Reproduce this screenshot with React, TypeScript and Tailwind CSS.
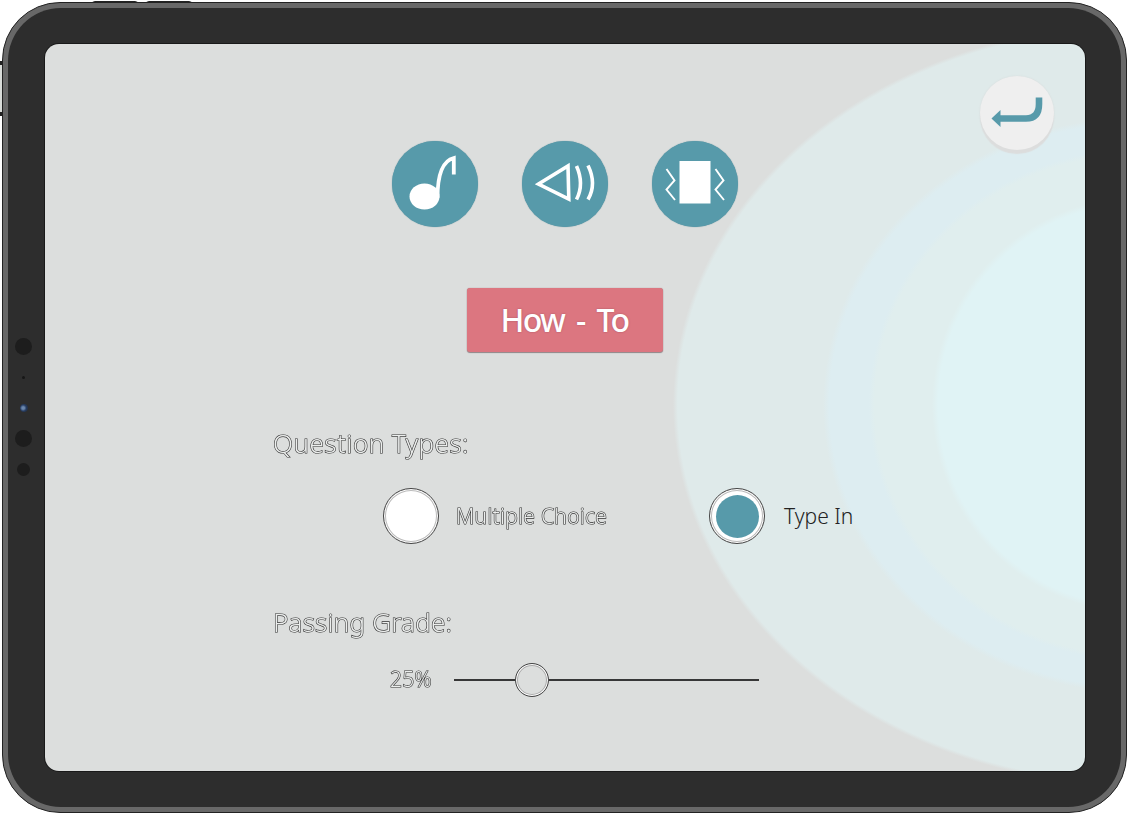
import React from "react";

function MusicIcon() {
  return (
    <svg viewBox="0 0 86 86" className="size-[86px]" fill="none">
      <ellipse cx="32.5" cy="55.5" rx="15" ry="13" fill="#fff" />
      <path d="M45.5 57 C45.5 38 49.5 20 61.8 17 V33.5" stroke="#fff" strokeWidth="3.8" />
    </svg>
  );
}

function SoundIcon() {
  return (
    <svg viewBox="0 0 86 86" className="size-[86px]" fill="none" stroke="#fff" strokeWidth="3.6">
      <path d="M16.5 43 L46 25 L46.8 58 Z" />
      <path d="M54.5 25 Q62.5 43 54.5 58.5" />
      <path d="M66 24.5 Q75 43 66 58.5" />
    </svg>
  );
}

function VibrateIcon() {
  return (
    <svg viewBox="0 0 86 86" className="size-[86px]" fill="none" stroke="#fff" strokeWidth="1.9">
      <rect x="27.5" y="20" width="31" height="42.5" fill="#fff" stroke="none" />
      <path d="M14.5 28 L22.5 39.5 L14.5 48.5 L23 59" />
      <path d="M63.5 28 L71.5 39.5 L63.5 48.5 L72 59" />
    </svg>
  );
}

function RoundButton({ label, children }: { label: string; children: React.ReactNode }) {
  return (
    <button aria-label={label} className="size-[86px] rounded-full bg-[#579aaa] shadow-[0_0_1px_#4d8492]">
      {children}
    </button>
  );
}

function Radio({ checked, label }: { checked: boolean; label: string }) {
  return (
    <span
      role="radio"
      aria-checked={checked}
      aria-label={label}
      className="flex size-14 items-center justify-center rounded-full border border-[#444] bg-white shadow-[inset_0_0_0_1px_#fff,inset_0_0_0_2px_#bbb]"
    >
      {checked && <span className="size-[43px] rounded-full bg-[#579aaa]" />}
    </span>
  );
}

const outlined =
  "whitespace-nowrap text-[#eceeed] will-change-transform [paint-order:stroke_fill] [-webkit-text-stroke:1.2px_#303030]";

export default function App() {
  return (
    <div className="relative h-[814px] w-[1128px] overflow-hidden bg-white font-['Noto_Sans','Open_Sans',sans-serif] text-[#333]">
      <div className="absolute top-px left-[91px] h-2 w-12 rounded-sm border border-[#222] bg-[#b9bdb9]" />
      <div className="absolute top-px left-[145px] h-2 w-12 rounded-sm border border-[#222] bg-[#b9bdb9]" />
      <div className="absolute top-[61px] left-0 h-[55px] w-2 border-y-4 border-y-[#222] bg-[#d9dcd9]" />
      <div className="absolute top-[2px] right-px bottom-px left-[2px] rounded-[58px] border border-[#222] bg-[#686868] p-[5px]">
        <div className="flex h-full w-full rounded-[53px] bg-[#2d2d2d] pt-9 pr-[36px] pb-[36px]">
          <div className="flex w-[37px] shrink-0 flex-col items-center pt-[294px] pr-[6px]">
            <span className="size-[17px] rounded-full bg-[#1d1d1d]" />
            <span className="mt-[21px] size-[3px] rounded-full bg-[#171717]" />
            <span className="mt-[25px] size-2 rounded-full bg-[radial-gradient(circle_at_40%_50%,#6b87ad_0_20%,#263c61_50%,#22252b)]" />
            <span className="mt-[18px] size-[17px] rounded-full bg-[#1d1d1d]" />
            <span className="mt-4 size-[13px] rounded-full bg-[#1d1d1d]" />
          </div>
          <main className="relative flex flex-1 flex-col rounded-[14px] bg-[#dcdedd] bg-[radial-gradient(208px_208px_at_1095px_361px,#e0f3f5_97%,transparent_100%),radial-gradient(271px_256px_at_1095px_361px,#e0eeee_98%,transparent_100%),radial-gradient(317px_288px_at_1095px_361px,#ddedf1_98%,transparent_100%),radial-gradient(467px_381px_at_1095px_361px,#dfeaea_99%,transparent_100%)] shadow-[0_0_0_1px_#191919]">
            <button
              aria-label="Back"
              className="absolute top-[32px] left-[935px] size-[74px] rounded-full bg-[#efefef] shadow-[0_4px_1px_#dcdddd,0_0_2px_#d6dada]"
            >
              <svg viewBox="0 0 74 74" className="size-[74px]">
                <path d="M18 42.5 H46 Q59 42.5 59 28 V21.5" fill="none" stroke="#579aaa" strokeWidth="6.6" />
                <path d="M11.5 42.5 L20.5 34 V51 Z" fill="#579aaa" />
              </svg>
            </button>
            <div className="flex gap-11 pt-[96.5px] pl-[346.5px]">
              <RoundButton label="Music"><MusicIcon /></RoundButton>
              <RoundButton label="Sound"><SoundIcon /></RoundButton>
              <RoundButton label="Vibration"><VibrateIcon /></RoundButton>
            </div>
            <button className="mt-[61px] ml-[421.5px] h-[64.5px] w-[196px] rounded-[3px] bg-[#dc7680] text-[32px] font-medium tracking-[-1.6px] whitespace-nowrap text-white [word-spacing:5px] shadow-[0_1px_1px_#918487,0_0_1px_#9a7478] [text-shadow:0_0_2px_#a55460]">
              How - To
            </button>
            <h2 className={`mt-[73px] ml-[228px] h-9 text-[26px] leading-9 font-light tracking-[0.5px] ${outlined}`}>
              Question Types:
            </h2>
            <div className="mt-[27px] flex h-14 items-center pl-[338px] text-[21px] font-light">
              <Radio checked={false} label="Multiple Choice" />
              <span className={`relative top-px ml-[17px] w-[253px] tracking-[0.3px] ${outlined}`}>Multiple Choice</span>
              <Radio checked label="Type In" />
              <span className="relative top-px ml-[19px] whitespace-nowrap text-[#222]">Type In</span>
            </div>
            <h2 className={`mt-[60px] ml-[228px] h-9 text-[26px] leading-9 font-light tracking-[0.2px] ${outlined}`}>
              Passing Grade:
            </h2>
            <div className="mt-[23px] flex h-[34px] items-center pl-[345px]">
              <span className={`w-[64px] text-[21px] font-light tracking-[0.3px] ${outlined}`}>25%</span>
              <span className="h-[2px] w-[61px] bg-[#373737]" />
              <span className="size-[34px] shrink-0 rounded-full border border-[#444] bg-[#dcdedd] shadow-[inset_0_0_0_1px_#fff,inset_0_0_0_2px_#aaa]" />
              <span className="h-[2px] w-[210px] bg-[#373737]" />
            </div>
          </main>
        </div>
      </div>
    </div>
  );
}
